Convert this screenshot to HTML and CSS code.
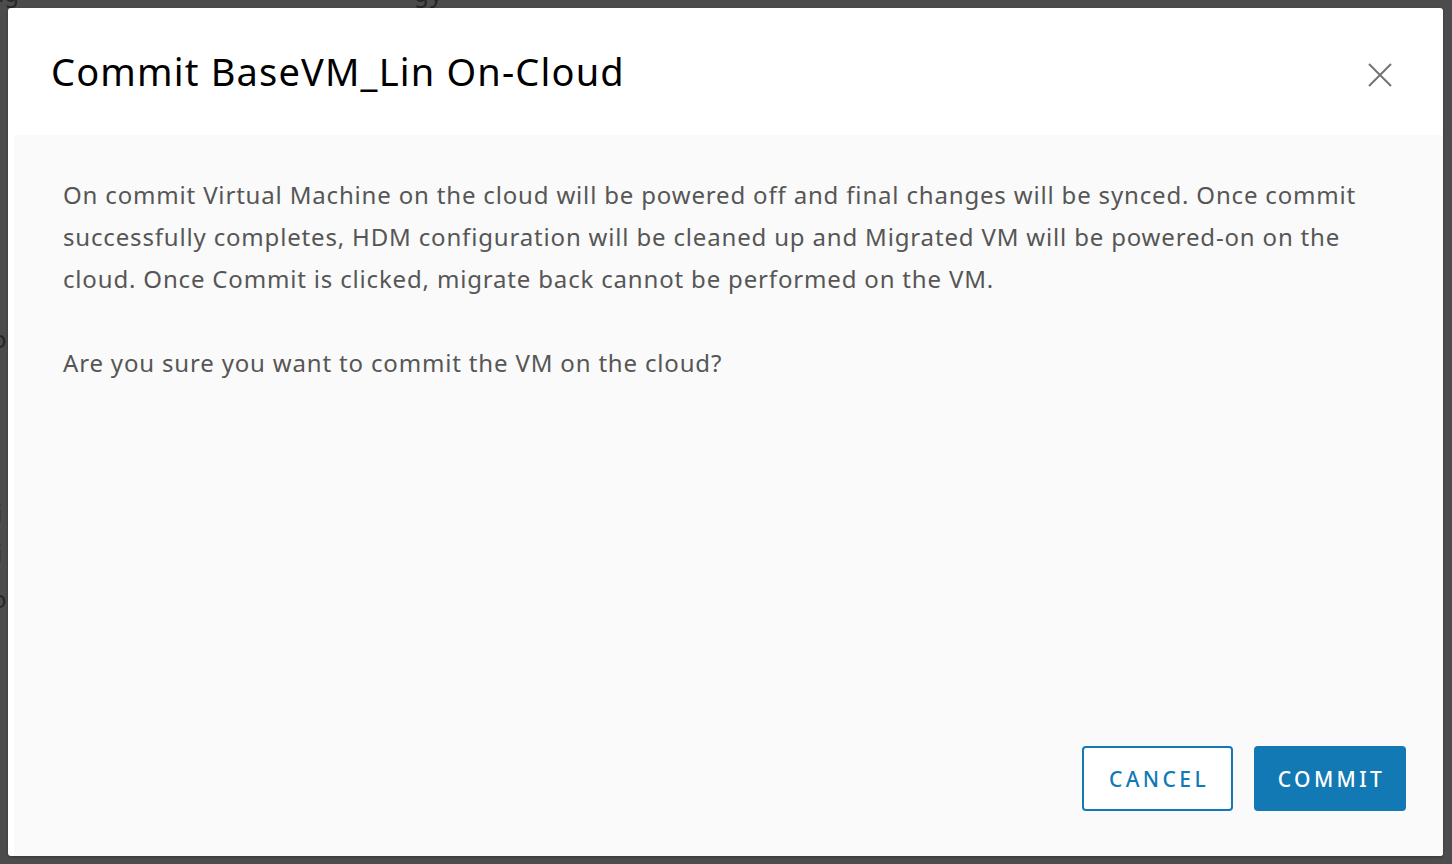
FILE: index.html
```html
<!DOCTYPE html>
<html>
<head>
<meta charset="utf-8">
<link rel="stylesheet" href="styles.css">
</head>
<body>
<div class="backdrop">
  <span class="frag f1">ig</span>
  <span class="frag f2">y</span>
  <span class="frag f3">g</span>
  <span class="frag f4">o</span>
  <span class="frag f5">i</span>
  <span class="frag f6">i</span>
  <span class="frag f7">o</span>
</div>
<div class="modal">
  <div class="modal-header">
    <h1 class="modal-title">Commit BaseVM_Lin On-Cloud</h1>
    <button class="close" aria-label="Close">
      <svg width="24" height="24" viewBox="0 0 24 24"><path d="M1 1 L23 23 M23 1 L1 23" stroke="#747474" stroke-width="2" fill="none"/></svg>
    </button>
  </div>
  <div class="modal-body">
    <p>On commit Virtual Machine on the cloud will be powered off and final changes will be synced. Once commit successfully completes, HDM configuration will be cleaned up and Migrated VM will be powered-on on the cloud. Once Commit is clicked, migrate back cannot be performed on the VM.</p>
    <p>Are you sure you want to commit the VM on the cloud?</p>
    <div class="spacer"></div>
    <div class="actions">
      <button class="btn btn-outline">CANCEL</button>
      <button class="btn btn-primary">COMMIT</button>
    </div>
  </div>
</div>
</body>
</html>
```
FILE: styles.css
```css
html, body {
  margin: 0;
  height: 100%;
}
body {
  background: #4c4c4c;
  padding: 8px 9px 8px 8px;
  box-sizing: border-box;
  font-family: "Noto Sans", sans-serif;
  overflow: hidden;
  position: relative;
}
.backdrop {
  position: absolute;
  inset: 0;
  z-index: 0;
}
.frag {
  position: absolute;
  color: #262626;
  font-size: 24px;
  font-family: "Noto Sans", sans-serif;
}
.f1 { left: -2px; top: -24px; }
.f2 { left: 430px; top: -24px; }
.f3 { left: 414px; top: -24px; }
.f4 { left: -8px; top: 322px; }
.f5 { left: -4px; top: 496px; }
.f6 { left: -4px; top: 536px; }
.f7 { left: -8px; top: 582px; }
.modal {
  position: relative;
  z-index: 1;
  height: 100%;
  background: #ffffff;
  border-radius: 3px;
  display: flex;
  flex-direction: column;
  box-shadow: 0 1px 3px rgba(0,0,0,0.3);
}
.modal-header {
  height: 127px;
  flex: none;
  display: flex;
  align-items: center;
  justify-content: space-between;
  padding: 0 51px 0 43px;
  box-sizing: border-box;
}
.modal-title {
  margin: 0;
  font-weight: 400;
  font-size: 38px;
  color: #000;
  letter-spacing: 1.17px;
  padding-bottom: 2px;
}
.close {
  background: none;
  border: 0;
  padding: 0;
  width: 24px;
  height: 24px;
  margin-top: 6px;
  cursor: pointer;
}
.modal-body {
  flex: 1;
  margin-left: 6px;
  background: #fafafa;
  padding: 39px 37px 45px 49px;
  display: flex;
  flex-direction: column;
  border-bottom-right-radius: 3px;
}
.modal-body p {
  margin: 0 0 42px 0;
  font-size: 24px;
  line-height: 42px;
  letter-spacing: 0.83px;
  color: #565656;
  max-width: 1310px;
}
.spacer { flex: 1; }
.actions {
  display: flex;
  justify-content: flex-end;
  gap: 21px;
}
.btn {
  height: 65px;
  border-radius: 4px;
  font-family: "Noto Sans", sans-serif;
  font-size: 21px;
  letter-spacing: 3.4px;
  font-weight: 500;
  box-sizing: border-box;
  padding: 0 0 0 3px;
}
.btn-outline {
  width: 151px;
  background: #ffffff;
  color: #1279b5;
  border: 2px solid #1279b5;
}
.btn-primary {
  width: 152px;
  background: #1279b5;
  color: #ffffff;
  border: 0;
}
```
